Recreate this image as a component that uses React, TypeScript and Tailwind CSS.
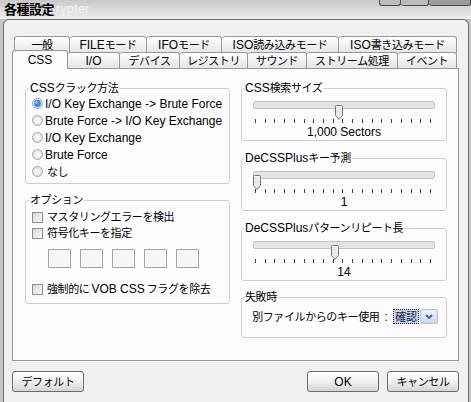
import React from "react";

// runs of Japanese text are drawn a touch smaller, like the narrow XP UI font
const JP = /([\u3000-\u30ff\u3400-\u9fff\uff00-\uffef]+)/;

const T = ({ s }: { s: string }) => (
  <>
    {s.split(JP).map((part, i) =>
      JP.test(part) ? (
        <span key={i} className="text-[11px] tracking-[-0.4px]">
          {part}
        </span>
      ) : (
        <span key={i}>{part}</span>
      )
    )}
  </>
);

const row1 = [
  { id: 1, name: "一般", w: "w-[56px]" },
  { id: 2, name: "FILEモード", w: "w-[77px]" },
  { id: 3, name: "IFOモード", w: "w-[75px]" },
  { id: 4, name: "ISO読み込みモード", w: "w-[117px]" },
  { id: 5, name: "ISO書き込みモード", w: "w-[118px]" },
];

const row2 = [
  { id: 1, name: "CSS", w: "w-[56px]" },
  { id: 2, name: "I/O", w: "w-[52px]" },
  { id: 3, name: "デバイス", w: "w-[60px]" },
  { id: 4, name: "レジストリ", w: "w-[68px]" },
  { id: 5, name: "サウンド", w: "w-[59px]" },
  { id: 6, name: "ストリーム処理", w: "w-[91px]" },
  { id: 7, name: "イベント", w: "w-[59px]" },
];

const methods = [
  "I/O Key Exchange -> Brute Force",
  "Brute Force -> I/O Key Exchange",
  "I/O Key Exchange",
  "Brute Force",
  "なし",
];

const Radio = ({ on }: { on?: boolean }) => (
  <svg width="11" height="11" viewBox="0 0 11 11" className="shrink-0">
    {on ? (
      <>
        <circle cx="5.5" cy="5.5" r="5" fill="#dce7f4" stroke="#8ba2c2" />
        <circle cx="5.5" cy="5.5" r="3.4" fill="#3b86d4" />
        <circle cx="4.6" cy="4.5" r="1.3" fill="#a9d2fb" />
      </>
    ) : (
      <>
        <circle cx="5.5" cy="5.5" r="5" fill="#e4e4e4" stroke="#a8a8a8" />
        <circle cx="5.5" cy="5.5" r="3" fill="#f6f6f6" />
      </>
    )}
  </svg>
);

const Check = () => (
  <div className="w-[11px] h-[11px] shrink-0 border border-[#8e8e8e] bg-gradient-to-br from-[#d9d9d9] to-[#fbfbfb]" />
);

const Thumb = () => (
  <svg width="8" height="15" viewBox="0 0 8 15">
    <path
      d="M0.5 1.5 Q0.5 0.5 1.5 0.5 H6.5 Q7.5 0.5 7.5 1.5 V10.5 L4 14.5 L0.5 10.5 Z"
      fill="#e9e9e9"
      stroke="#777"
    />
    <path d="M1.5 1.5 H6.5 V5" fill="none" stroke="#fff" />
  </svg>
);

const Slider = ({ left, label }: { left: string; label: string }) => (
  <div className="mx-[9px]">
    <div className="relative h-[18px]">
      <div className="mt-[6px] h-[8px] rounded-[2px] border border-[#c4c4c4] bg-[#e4e4e4]" />
      <div className={`absolute top-[4px] ${left}`}>
        <Thumb />
      </div>
    </div>
    <div className="flex justify-between h-[4px] ml-[2px] mr-[4px]">
      {Array.from({ length: 19 }).map((_, i) => (
        <div key={i} className="w-[1px] h-full bg-[#3c3c3c]" />
      ))}
    </div>
    <div className="mt-[2px] h-[14px] text-center">{label}</div>
  </div>
);

const Btn = ({ label, className = "" }: { label: string; className?: string }) => (
  <div
    className={`w-[72px] h-[21px] flex items-center justify-center border border-[#6c6c6c] rounded-[3px] bg-gradient-to-b from-white via-[#f1f1f1] to-[#d4d4d4] ${className}`}
  >
    <T s={label} />
  </div>
);

export default function App() {
  return (
    <div className="w-[471px] h-[402px] overflow-hidden flex flex-col bg-[#c4c4c4] font-['Liberation_Sans','Noto_Sans_CJK_JP',sans-serif] text-[12px] leading-[14px] text-black">
      <div className="h-[19px] shrink-0 flex items-start bg-gradient-to-b from-[#c8c8c8] to-[#ededed]">
        <span className="ml-[4px] mt-[1px] text-[13px] leading-[15px] font-bold font-['Noto_Sans_CJK_JP',sans-serif] tracking-[-0.5px]">
          各種設定
        </span>
        <span className="ml-[2px] mt-[1px] text-[13px] leading-[15px] text-[#f3f3f3]">rypter</span>
        <div className="ml-auto flex h-[6px]">
          <div className="w-[22px] border-x border-b border-[#4a4a4a] rounded-b-[3px] bg-[#bcbcbc]" />
          <div className="w-[28px] border-r border-b border-[#4a4a4a] rounded-b-[3px] bg-[#bcbcbc]" />
          <div className="w-[42px] border-r border-b border-[#4a4a4a] rounded-b-[3px] bg-[#9a9a9a]" />
        </div>
      </div>

      <div className="flex-1 ml-[3px] mr-[2px] rounded-t-[6px] border-t border-x border-[#6f6f6f] bg-[#f0f0f0] px-[8px] pt-[16px]">
        {/* tabs */}
        <div className="flex h-[17px] pl-[2px]">
          {row1.map((t, i) => (
            <div
              key={t.id}
              className={`${t.w} h-full pt-[1px] flex justify-center border-t border-r ${
                i === 0 ? "border-l" : ""
              } border-[#919b9c] rounded-t-[3px] bg-gradient-to-b from-white to-[#e4e4e4]`}
            >
              <T s={t.name} />
            </div>
          ))}
        </div>
        <div className="relative z-10 flex items-end h-[16px] -mt-[1px]">
          {row2.map((t, i) =>
            i === 0 ? (
              <div
                key={t.id}
                className={`${t.w} h-[19px] -mb-[1px] pt-[2px] flex justify-center border-t border-x border-[#919b9c] rounded-t-[3px] bg-[#fcfcfe]`}
              >
                <T s={t.name} />
              </div>
            ) : (
              <div
                key={t.id}
                className={`${t.w} h-[16px] pt-[1px] flex justify-center border-t border-r border-[#919b9c] rounded-t-[3px] bg-gradient-to-b from-white to-[#e4e4e4]`}
              >
                <T s={t.name} />
              </div>
            )
          )}
        </div>

        {/* panel */}
        <div className="w-[447px] h-[293px] flex gap-[11px] pl-[12px] pt-[12px] border border-[#919b9c] bg-[#fcfcfe]">
          <div className="w-[205px] flex flex-col">
            <fieldset className="border border-[#d0d0bf] rounded-[3px] px-[6px] pb-[3px]">
              <legend className="-ml-[3px] px-[1px]">
                <T s="CSSクラック方法" />
              </legend>
              {methods.map((m, i) => (
                <div key={m} className="h-[17px] flex items-center gap-[2px]">
                  <Radio on={i === 0} />
                  <T s={m} />
                </div>
              ))}
            </fieldset>

            <fieldset className="mt-[9px] border border-[#d0d0bf] rounded-[3px] px-[6px] pb-[6px]">
              <legend className="-ml-[3px] px-[1px]">
                <T s="オプション" />
              </legend>
              <div className="mt-[2px] h-[16px] flex items-center gap-[2px]">
                <Check />
                <T s="マスタリングエラーを検出" />
              </div>
              <div className="h-[16px] flex items-center gap-[2px]">
                <Check />
                <T s="符号化キーを指定" />
              </div>
              <div className="mt-[8px] ml-[16px] flex gap-[9px]">
                {[1, 2, 3, 4, 5].map((k) => (
                  <div key={k} className="w-[23px] h-[19px] border border-[#a5a5a5] bg-[#f6f6f6]" />
                ))}
              </div>
              <div className="mt-[13px] h-[16px] flex items-center gap-[2px]">
                <Check />
                <T s="強制的にVOB CSSフラグを除去" />
              </div>
            </fieldset>
          </div>

          <div className="w-[206px] flex flex-col">
            <fieldset className="border border-[#d0d0bf] rounded-[3px] px-[2px] pb-[1px]">
              <legend className="px-[1px]">
                <T s="CSS検索サイズ" />
              </legend>
              <Slider left="left-[82px]" label="1,000 Sectors" />
            </fieldset>

            <fieldset className="mt-[10px] border border-[#d0d0bf] rounded-[3px] px-[2px] pb-[1px]">
              <legend className="px-[1px]">
                <T s="DeCSSPlusキー予測" />
              </legend>
              <Slider left="left-[0px]" label="1" />
            </fieldset>

            <fieldset className="mt-[10px] border border-[#d0d0bf] rounded-[3px] px-[2px] pb-[1px]">
              <legend className="px-[1px]">
                <T s="DeCSSPlusパターンリピート長" />
              </legend>
              <Slider left="left-[78px]" label="14" />
            </fieldset>

            <fieldset className="mt-[9px] border border-[#d0d0bf] rounded-[3px] px-[2px] pb-[13px]">
              <legend className="px-[1px]">
                <T s="失敗時" />
              </legend>
              <div className="mt-[5px] h-[15px] flex items-center justify-between pl-[3px] pr-[6px]">
                <T s="別ファイルからのキー使用:" />
                <div className="flex gap-[1px]">
                  <div className="w-[26px] h-[15px] flex items-center justify-center border border-dotted border-[#222] bg-[#c7d4ea] text-[#13254d]">
                    <T s="確認" />
                  </div>
                  <div className="w-[18px] h-[15px] flex items-center justify-center border border-[#b1c0da] rounded-[2px] bg-gradient-to-b from-[#eef3fb] to-[#cbd9ef]">
                    <svg width="8" height="5" viewBox="0 0 8 5">
                      <path d="M1 1 L4 4 L7 1" fill="none" stroke="#4a5f8a" strokeWidth="1.8" />
                    </svg>
                  </div>
                </div>
              </div>
            </fieldset>
          </div>
        </div>

        {/* buttons */}
        <div className="flex mt-[10px] h-[21px] pr-[1px]">
          <Btn label="デフォルト" />
          <div className="flex-1" />
          <Btn label="OK" />
          <Btn label="キャンセル" className="ml-[8px]" />
        </div>
      </div>
    </div>
  );
}
